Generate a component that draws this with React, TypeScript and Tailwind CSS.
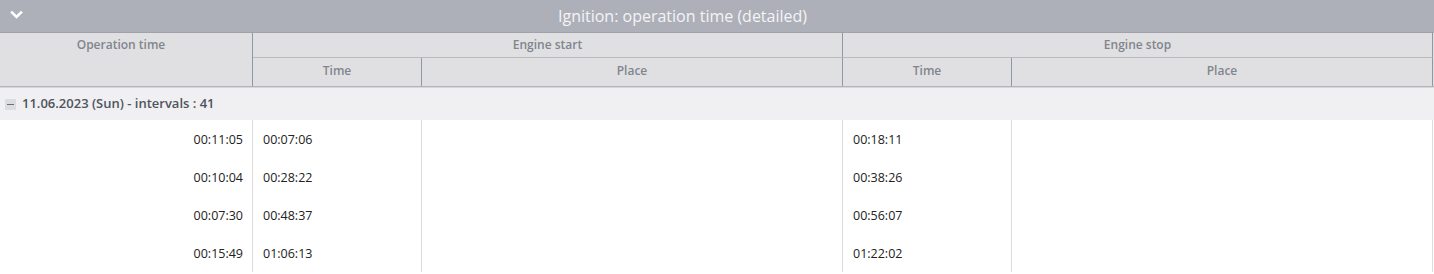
import React from "react";

const cols = "grid grid-cols-[253px_169px_421px_169px_421px]";
const cell = "border-r border-[#dcdcdc] flex items-center pt-[2px]";

const rows = [
  ["00:11:05", "00:07:06", "", "00:18:11", ""],
  ["00:10:04", "00:28:22", "", "00:38:26", ""],
  ["00:07:30", "00:48:37", "", "00:56:07", ""],
  ["00:15:49", "01:06:13", "", "01:22:02", ""],
];

export default function App() {
  return (
    <div className="w-[1434px] h-[274px] overflow-hidden bg-white font-['Open_Sans',sans-serif]">
      {/* Title bar */}
      <div className="h-[33px] bg-[#adb0b9] border-b border-[#9fa2ab] flex items-center relative">
        <svg
          className="absolute left-[10px] top-[10px]"
          width="13"
          height="10"
          viewBox="0 0 13 10"
        >
          <polyline
            points="2,2.5 6.5,7 11,2.5"
            fill="none"
            stroke="#ffffff"
            strokeWidth="2.6"
            strokeLinecap="square"
          />
        </svg>
        <div className="flex-1 text-center pr-[69px] text-[16px] text-[#f4f4f6] leading-none">
          Ignition: operation time (detailed)
        </div>
      </div>

      {/* Column headers */}
      <div className={`${cols} bg-[#e0e0e2] border-b border-[#b4b5ba] text-[12px] leading-[16px] font-semibold text-[#80858e]`}>
        <div className="row-span-2 border-r border-[#8e99a5] text-center pt-[4px] pr-[10px]">
          Operation time
        </div>
        <div className="col-span-2 h-[25px] border-r border-b border-[#8e99a5] border-b-[#b9babe] text-center pt-[4px]">
          Engine start
        </div>
        <div className="col-span-2 h-[25px] border-r border-b border-[#8e99a5] border-b-[#b9babe] text-center pt-[4px]">
          Engine stop
        </div>
        <div className="h-[28px] border-r border-[#8e99a5] text-center pt-[5px]">Time</div>
        <div className="h-[28px] border-r border-[#8e99a5] text-center pt-[5px]">Place</div>
        <div className="h-[28px] border-r border-[#8e99a5] text-center pt-[5px]">Time</div>
        <div className="h-[28px] border-r border-[#8e99a5] text-center pt-[5px]">Place</div>
      </div>

      {/* Group row */}
      <div className="h-[33px] bg-[#f0f0f2] border-t border-[#d6d6da] flex items-center pl-[5px] gap-[6px]">
        <div className="w-[11px] h-[11px] bg-[#dcdde0] flex items-center justify-center">
          <div className="w-[7px] h-[1px] bg-[#6b7079]" />
        </div>
        <span className="text-[13px] font-semibold text-[#4f545d]">
          11.06.2023 (Sun) - intervals : 41
        </span>
      </div>

      {/* Data rows */}
      {rows.map((r, i) => (
        <div key={i} className={`${cols} h-[38px] text-[12.5px] text-[#222]`}>
          <div className={`${cell} justify-end pr-[9px]`}>{r[0]}</div>
          <div className={`${cell} pl-[10px]`}>{r[1]}</div>
          <div className={`${cell} pl-[10px]`}>{r[2]}</div>
          <div className={`${cell} pl-[10px]`}>{r[3]}</div>
          <div className={`${cell} pl-[10px]`}>{r[4]}</div>
        </div>
      ))}
    </div>
  );
}
